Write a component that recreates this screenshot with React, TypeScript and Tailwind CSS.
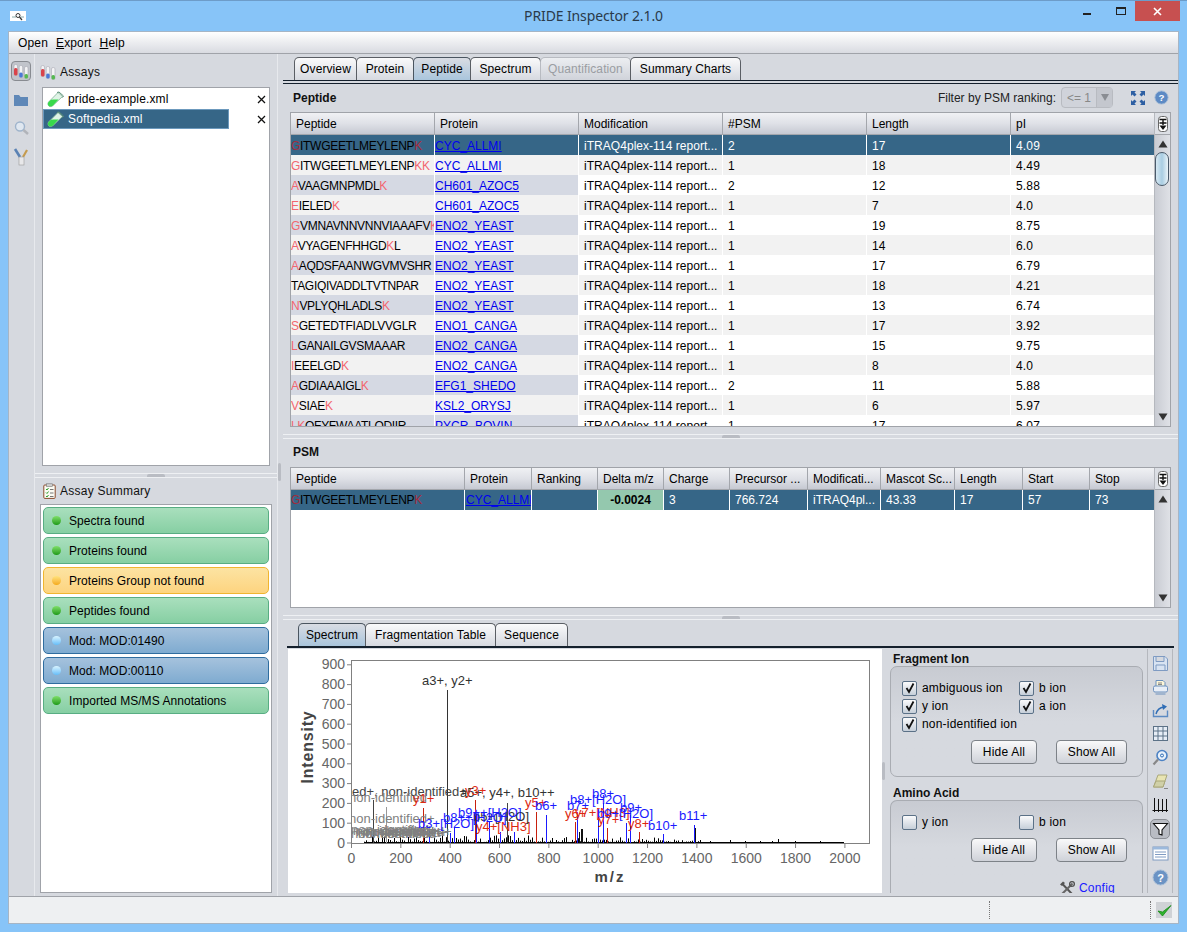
import React from "react";

const F = "[font-family:'Liberation_Sans',Arial,sans-serif]";

type Row = [string, string, string, number, number, string];
const rows: Row[] = [
  ["G|ITWGEETLMEYLENP|K", "CYC_ALLMI", "2", 17, 0, "4.09"],
  ["G|ITWGEETLMEYLENP|KK", "CYC_ALLMI", "1", 18, 0, "4.49"],
  ["A|VAAGMNPMDL|K", "CH601_AZOC5", "2", 12, 0, "5.88"],
  ["E|IELED|K", "CH601_AZOC5", "1", 7, 0, "4.0"],
  ["G|VMNAVNNVNNVIAAAFV|K", "ENO2_YEAST", "1", 19, 0, "8.75"],
  ["A|VYAGENFHHGD|K|L", "ENO2_YEAST", "1", 14, 0, "6.0"],
  ["A|AQDSFAANWGVMVSHR", "ENO2_YEAST", "1", 17, 0, "6.79"],
  ["|TAGIQIVADDLTVTNPAR", "ENO2_YEAST", "1", 18, 0, "4.21"],
  ["N|VPLYQHLADLS|K", "ENO2_YEAST", "1", 13, 0, "6.74"],
  ["S|GETEDTFIADLVVGLR", "ENO1_CANGA", "1", 17, 0, "3.92"],
  ["L|GANAILGVSMAAAR", "ENO2_CANGA", "1", 15, 0, "9.75"],
  ["I|EEELGD|K", "ENO2_CANGA", "1", 8, 0, "4.0"],
  ["A|GDIAAAIGL|K", "EFG1_SHEDO", "2", 11, 0, "5.88"],
  ["V|SIAE|K", "KSL2_ORYSJ", "1", 6, 0, "5.97"],
  ["LK|QFYFWAATLQDIIR", "PYCR_BOVIN", "1", 17, 0, "6.07"],
];

function Seq({ s, dim }: { s: string; dim?: boolean }) {
  const parts = s.split("|");
  return (
    <span className="tracking-[-0.3px] whitespace-nowrap">
      {parts.map((p, i) => (
        <span key={i} className={i % 2 === 0 ? (dim ? "text-[#a32b3c]" : "text-[#f2666f]") : "text-black"}>{p}</span>
      ))}
    </span>
  );
}

function HeaderCell({ w, children }: { w: string; children: React.ReactNode }) {
  return (
    <div className={`${w} h-full shrink-0 border-r border-[#a3a6ac] pl-[5px] flex items-center bg-gradient-to-b from-[#f0f1f4] via-[#dfe1e7] to-[#c6c9d2] text-[12px] text-black truncate`}>
      {children}
    </div>
  );
}

function Triangle({ up }: { up?: boolean }) {
  return (
    <svg width="10" height="8" viewBox="0 0 10 8">
      <path d={up ? "M5 0.5L9.5 7.5H0.5Z" : "M5 7.5L9.5 0.5H0.5Z"} fill="#333" />
    </svg>
  );
}

function ColumnIcon() {
  return (
    <div className="h-[22px] w-full shrink-0 flex items-center justify-center bg-[#dcdfe5] border-b border-[#a3a6ac]">
      <svg width="12" height="18" viewBox="0 0 12 18" fill="none">
        <rect x="1.5" y="1.5" width="9" height="15" rx="3" fill="#fff" stroke="#666" />
        <path d="M2.5 4.5H9.5M2.5 8H9.5M6 4.5V10" stroke="#111" strokeWidth="1.4" />
        <path d="M2.5 10.5H9.5L6 15Z" fill="#111" />
      </svg>
    </div>
  );
}

function Scrollbar({ thumb }: { thumb?: boolean }) {
  return (
    <div className="w-[16px] h-full shrink-0 flex flex-col border-l border-[#b5b8be] bg-gradient-to-r from-[#c9ccd3] to-[#dfe1e6]">
      <ColumnIcon />
      <div className="h-[17px] flex items-center justify-center shrink-0"><Triangle up /></div>
      <div className="flex-1 min-h-0">
        {thumb && <div className="h-[34px] w-[14px] rounded-[9px] border border-[#4a5a6a] bg-gradient-to-r from-[#d6e8f2] via-[#a9cde2] to-[#eaf3f8]" />}
      </div>
      <div className="h-[18px] flex items-center justify-center shrink-0"><Triangle /></div>
    </div>
  );
}

function PeptideTable() {
  const ws = ["w-[144px]", "w-[144px]", "w-[144px]", "w-[144px]", "w-[144px]", "w-[145px]"];
  return (
    <div className="mx-[7px] h-[315px] border border-[#a0a3a9] bg-white flex overflow-hidden">
      <div className="flex-1 min-w-0 flex flex-col">
        <div className="h-[22px] flex border-b border-[#a3a6ac] shrink-0">
          {["Peptide", "Protein", "Modification", "#PSM", "Length", "pI"].map((h, i) => (
            <HeaderCell key={h} w={ws[i]}>{h}</HeaderCell>
          ))}
        </div>
        <div className="flex-1 min-h-0 overflow-hidden">
          {rows.map((r, i) => {
            const sel = i === 0;
            const odd = i % 2 === 1;
            const alt = i % 2 === 0;
            const lead = sel ? "bg-[#366687]" : alt ? "bg-[#d5d9e3]" : "bg-[#f2f2f2]";
            const rest = sel ? "bg-[#366687] text-white" : odd ? "bg-[#f2f2f2] text-black" : "bg-white text-black";
            const c = "h-[20px] shrink-0 flex items-center pt-[1px] border-r border-white text-[12px] overflow-hidden";
            return (
              <div key={i} className="flex h-[20px]">
                <div className={`${c} w-[144px] ${lead}`}><Seq s={r[0]} dim={sel} /></div>
                <div className={`${c} w-[144px] ${lead}`}><span className="text-[#0000ee] underline">{r[1]}</span></div>
                <div className={`${c} w-[144px] pl-[5px] tracking-[0.04px] ${rest}`}>iTRAQ4plex-114 report...</div>
                <div className={`${c} w-[144px] pl-[5px] ${rest}`}>{r[2]}</div>
                <div className={`${c} w-[144px] pl-[5px] ${rest}`}>{r[3]}</div>
                <div className={`${c} w-[145px] pl-[5px] tracking-[0.15px] ${rest}`}>{r[5]}</div>
              </div>
            );
          })}
        </div>
      </div>
      <Scrollbar thumb />
    </div>
  );
}

function PsmTable() {
  const cols: [string, string, string][] = [
    ["Peptide", "w-[174px]", ""],
    ["Protein", "w-[67px]", ""],
    ["Ranking", "w-[66px]", ""],
    ["Delta m/z", "w-[66px]", ""],
    ["Charge", "w-[66px]", "3"],
    ["Precursor ...", "w-[78px]", "766.724"],
    ["Modificati...", "w-[73px]", "iTRAQ4pl..."],
    ["Mascot Sc...", "w-[74px]", "43.33"],
    ["Length", "w-[68px]", "17"],
    ["Start", "w-[67px]", "57"],
    ["Stop", "w-[66px]", "73"],
  ];
  return (
    <div className="mx-[7px] h-[141px] border border-[#a0a3a9] bg-white flex overflow-hidden">
      <div className="flex-1 min-w-0 flex flex-col">
        <div className="h-[22px] flex border-b border-[#a3a6ac] shrink-0">
          {cols.map((c) => <HeaderCell key={c[0]} w={c[1]}>{c[0]}</HeaderCell>)}
        </div>
        <div className="flex h-[20px] text-[12px] text-white bg-[#366687]">
          {cols.map((c, i) => (
            <div key={c[0]} className={`${c[1]} h-full shrink-0 flex items-center border-r border-white overflow-hidden ${i > 3 ? "pl-[5px]" : ""}`}>
              {i === 0 && <Seq s="G|ITWGEETLMEYLENP|K" dim />}
              {i === 1 && <span className="text-[#0000ee] underline pl-[1px]">CYC_ALLMI</span>}
              {i === 3 && <div className="w-full h-full bg-[#94c8ae] text-black font-bold flex items-center justify-center">-0.0024</div>}
              {i > 3 && c[2]}
            </div>
          ))}
        </div>
      </div>
      <Scrollbar />
    </div>
  );
}

function Tab({ label, w, active, disabled, first }: { label: string; w: string; active?: boolean; disabled?: boolean; first?: boolean }) {
  return (
    <div
      className={`${w} h-[23px] shrink-0 flex items-center justify-center rounded-t-[5px] border border-b-0 text-[12px] tracking-[0.1px] ${first ? "" : "ml-[-1px]"} ${
        active
          ? "border-[#4a5560] bg-gradient-to-b from-[#d9dce3] to-[#a9c5dc] text-black"
          : disabled
          ? "border-[#b8bbc1] bg-gradient-to-b from-[#eceef1] to-[#d0d3da] text-[#9a9da2]"
          : "border-[#5a5e64] bg-gradient-to-b from-[#fafafb] to-[#d6d9e0] text-black"
      }`}
    >
      {label}
    </div>
  );
}

function Divider({ className }: { className: string }) {
  return (
    <div className={`${className} flex items-center justify-center border-y border-[#eef0f3]`}>
      <div className="w-[18px] h-[3px] bg-[#b9bcc3] rounded-t-[2px]" />
    </div>
  );
}

function Tube() {
  return (
    <svg width="17" height="17" viewBox="0 0 17 17" fill="none" className="shrink-0">
      <path d="M11 1.5L15.5 5.5L6 14.5C4.5 16 2.6 15.8 1.6 14.7C.6 13.6.7 11.8 2 10.6Z" fill="#dff3e6" stroke="#7fae95" strokeWidth=".8" />
      <path d="M6.5 8.5L11.5 8.5L6 14.5C4.5 16 2.6 15.8 1.6 14.7C.6 13.6.7 11.8 2 10.6L4 8.8Z" fill="#38d94c" />
      <path d="M10 1.5L12 1L16.5 5L15.5 6.5" stroke="#5c8f78" strokeWidth="1" />
    </svg>
  );
}

function AssayIcon({ s = 16 }: { s?: number }) {
  return (
    <svg width={s} height={s} viewBox="0 0 16 16" fill="none">
      <rect x="1" y="1.5" width="3.5" height="11" rx="1.5" fill="#f3f3f5" stroke="#a9a9b3" strokeWidth=".6" />
      <rect x="1" y="5" width="3.5" height="7.5" rx="1.5" fill="#d9434a" />
      <rect x="6.2" y="2.5" width="3.5" height="12" rx="1.5" fill="#f3f3f5" stroke="#a9a9b3" strokeWidth=".6" />
      <rect x="6.2" y="9.5" width="3.5" height="5" rx="1.5" fill="#4a78d6" />
      <rect x="11.5" y="3.5" width="3.5" height="12" rx="1.5" fill="#f3f3f5" stroke="#a9a9b3" strokeWidth=".6" />
      <rect x="11.5" y="11" width="3.5" height="4.5" rx="1.5" fill="#56b851" />
    </svg>
  );
}

function AssayItem({ name, sel }: { name: string; sel?: boolean }) {
  return (
    <div className="h-[20px] flex items-center">
      <div className={`w-[186px] h-[20px] flex items-center gap-[4px] pl-[3px] text-[12px] tracking-[0.15px] border ${sel ? "bg-[#366687] text-white border-[#6c99bd]" : "border-transparent text-black"}`}>
        <Tube />
        {name}
      </div>
      <div className="ml-[28px] text-[#111]">
        <svg width="9" height="9" viewBox="0 0 9 9"><path d="M1 1L8 8M8 1L1 8" stroke="#111" strokeWidth="1.3" /></svg>
      </div>
    </div>
  );
}

function Pill({ label, kind }: { label: string; kind: "g" | "y" | "b" }) {
  const box = {
    g: "from-[#a9dfbd] to-[#86cfa3] border-[#58ad83]",
    y: "from-[#fce3a2] to-[#fdd47f] border-[#f0b52f]",
    b: "from-[#a5c2dd] to-[#7fabd0] border-[#2f6d9f]",
  }[kind];
  const dot = {
    g: "from-[#7fe06a] to-[#169a12]",
    y: "from-[#ffe37c] to-[#f4a90f]",
    b: "from-[#d9f4ff] to-[#63bdf8]",
  }[kind];
  return (
    <div className={`h-[27px] mb-[3px] rounded-[5px] border bg-gradient-to-b ${box} flex items-center pl-[8px] gap-[8px] text-[12px] tracking-[0.05px] text-black`}>
      <div className={`w-[9px] h-[9px] rounded-full bg-gradient-to-b ${dot}`} />
      {label}
    </div>
  );
}

function Check({ on, label }: { on?: boolean; label: string }) {
  return (
    <div className="h-[18px] flex items-center gap-[5px] text-[12px] tracking-[0.2px] text-black whitespace-nowrap">
      <div className="w-[15px] h-[15px] rounded-[2px] border border-[#5b7187] bg-gradient-to-b from-[#fbfbfc] to-[#c6cfd9] flex items-center justify-center">
        {on && <svg width="12" height="12" viewBox="0 0 12 12"><path d="M2.5 6L5 10L9.5 1.5" fill="none" stroke="#111" strokeWidth="1.8" /></svg>}
      </div>
      {label}
    </div>
  );
}

function Btn({ label, w }: { label: string; w: string }) {
  return (
    <div className={`${w} h-[24px] rounded-[4px] border border-[#7d8288] bg-gradient-to-b from-[#f9f9fa] to-[#cfd2d9] flex items-center justify-center text-[12px] tracking-[0.2px] text-black`}>
      {label}
    </div>
  );
}

type Lbl = [number, number, string, string];
const grayLabels: Lbl[] = [
  [352, 796, "ed+, non-identified+", "#444"],
  [349, 802, "non-identified", "#808080"],
  [349, 823, "non-identified+", "#808080"],
  [351, 834, "non-identified+", "#808080"],
  [353, 835, "non-identified+", "#808080"],
  [356, 836, "non-identified+", "#808080"],
  [351, 838, "non-identified+", "#808080"],
  [358, 838, "non-identified+", "#808080"],
  [362, 837, "non-identified+", "#808080"],
  [366, 836, "non-identified+", "#808080"],
];
const labels: Lbl[] = [
  [422, 685, "a3+, y2+", "#333"],
  [460, 797, "a5+, y4+, b10++", "#333"],
  [413, 803, "y1+", "#dd2a10"],
  [465, 795, "y3+", "#dd2a10"],
  [525, 807, "y5+", "#dd2a10"],
  [535, 810, "b6+", "#1a1aff"],
  [567, 810, "b7+", "#1a1aff"],
  [570, 804, "b8+[H2O]", "#1a1aff"],
  [592, 798, "b8+", "#1a1aff"],
  [565, 818, "y6+", "#dd2a10"],
  [575, 817, "y7+[NH3]", "#dd2a10"],
  [597, 818, "b9+[H2O]", "#1a1aff"],
  [598, 824, "y7+", "#dd2a10"],
  [620, 812, "b9+", "#1a1aff"],
  [628, 828, "y8+", "#dd2a10"],
  [648, 830, "b10+", "#1a1aff"],
  [679, 820, "b11+", "#1a1aff"],
  [476, 831, "y4+[NH3]", "#dd2a10"],
  [473, 821, "b5+[H2O]", "#333"],
  [443, 822, "b8++[H2O]", "#1a1aff"],
  [458, 817, "b9++[H2O]", "#1a1aff"],
  [418, 828, "b3+[H2O]", "#1a1aff"],
];
const peaks: [number, number, string][] = [
  [447.5, 690, "#333"], [373.5, 800, "#444"], [386.5, 807, "#999"], [423.5, 808, "#c8200d"], [429.5, 831, "#1a1aff"],
  [450.5, 833, "#1a1aff"], [454.5, 827, "#1a1aff"], [475.5, 800, "#c8200d"], [476.5, 815, "#1a1aff"], [489.5, 821, "#1a1aff"],
  [500.5, 832, "#1a1aff"], [507.5, 803, "#444"], [514.5, 832, "#1a1aff"], [536.5, 812, "#c8200d"], [546.5, 815, "#1a1aff"],
  [575.5, 822, "#c8200d"], [577.5, 812, "#1a1aff"], [579.5, 832, "#111"], [581.5, 829, "#111"], [582.5, 829, "#111"], [598.5, 810, "#1a1aff"],
  [603.5, 803, "#1a1aff"], [607.5, 828, "#c8200d"], [626.5, 823, "#1a1aff"], [630.5, 815, "#1a1aff"], [639.5, 832, "#c8200d"],
  [663.5, 834, "#1a1aff"], [694.5, 825, "#1a1aff"], [695.5, 828, "#111"],
];

function Chart() {
  const noise: string[] = [];
  for (let x = 364; x < 700; x += 2) {
    const v = Math.abs(Math.sin(x * 12.9898) * 43758.5453) % 1;
    const lim = x < 530 ? 7 : x < 660 ? 5 : 3;
    noise.push(`M${x + 0.5} 843V${(843 - 1 - v * v * lim).toFixed(1)}`);
  }
  const xt = [0, 200, 400, 600, 800, 1000, 1200, 1400, 1600, 1800, 2000];
  const yt = [0, 100, 200, 300, 400, 500, 600, 700, 800, 900];
  return (
    <svg viewBox="288 649 594 244" width="594" height="244" className="block shrink-0">
      <defs>
        <clipPath id="plot"><rect x="351" y="660" width="518" height="183" /></clipPath>
      </defs>
      <rect x="288" y="649" width="594" height="244" fill="#fff" />
      <rect x="351.5" y="660.5" width="518" height="183" fill="none" stroke="#808080" />
      <g fontFamily="'Liberation Sans', Arial, sans-serif" fontSize="13">
        {yt.map((v) => {
          const y = 843 - v * 0.198;
          return (
            <g key={v}>
              <path d={`M347 ${y}H351`} stroke="#808080" />
              <text x="345" y={y + 4.5} textAnchor="end" fill="#666" fontSize="14">{v}</text>
            </g>
          );
        })}
        {xt.map((v) => {
          const x = 351.5 + v * 0.2467;
          return (
            <g key={v}>
              <path d={`M${x} 844V848`} stroke="#808080" />
              <text x={x} y="863" textAnchor="middle" fill="#666" fontSize="14">{v}</text>
            </g>
          );
        })}
        <text transform="translate(313 747) rotate(-90)" textAnchor="middle" fontWeight="bold" fontSize="16" letterSpacing="0.8" fill="#444">Intensity</text>
        <text x="610" y="882" textAnchor="middle" fontWeight="bold" fontSize="15" fill="#444" letterSpacing="2">m/z</text>
        <g clipPath="url(#plot)">
          <path d="M365 842.5H844" stroke="#000" />
          <path d={noise.join("")} stroke="#000" strokeWidth="1" />
          <path d="M700.5 843V840M710.5 843V841M730.5 843V840M745.5 843V841M760.5 843V841M772.5 843V841M778.5 843V839M795.5 843V841M820.5 843V841" stroke="#000" />
          {peaks.map((p, i) => <path key={i} d={`M${p[0]} 843V${p[1]}`} stroke={p[2]} />)}
          {grayLabels.map((l, i) => <text key={i} x={l[0]} y={l[1]} fill={l[3]}>{l[2]}</text>)}
          {labels.map((l, i) => <text key={i} x={l[0]} y={l[1]} fill={l[3]}>{l[2]}</text>)}
        </g>
      </g>
    </svg>
  );
}

const toolIcons: React.ReactNode[] = [
  <path d="M1.5 1.5H13L15.5 4V15.5H1.5ZM4 1.5V6.5H12V1.5M4 15.5V10H13V15.5" fill="#d8e3f2" stroke="#7f9bc2" />,
  <g stroke="#6b90bd" fill="#e8eef7"><path d="M4 7V1.5H11L13 3.5V7" fill="#fdf6d8" /><rect x="1.5" y="7" width="14" height="6" rx="1.5" /><path d="M3.5 15H13.5" /><path d="M6 4H10M6 5.5H10" stroke="#888" /></g>,
  <g fill="none" strokeWidth="1.4"><path d="M1.5 8V14.5H15.5V8.5" stroke="#5b8ac2" /><path d="M4 12C5 8 8 5.5 12 5" stroke="#2f6db5" /><path d="M10 2L15 4.5L11 8Z" fill="#2f6db5" stroke="none" /></g>,
  <g fill="#e6edf6" stroke="#5c7287"><rect x="1.5" y="1.5" width="14" height="14" /><path d="M1.5 6H15.5M1.5 11H15.5M6 1.5V15.5M11 1.5V15.5" /></g>,
  <g fill="none"><circle cx="10" cy="6.5" r="5" stroke="#4c82c4" strokeWidth="1.6" fill="#e8f1fb" /><path d="M6 10.5L1.5 15.5" stroke="#888" strokeWidth="2.2" /><circle cx="10" cy="6.5" r="1.5" stroke="#2f6db5" /></g>,
  <g><path d="M6 2H15L11 14H1.5Z" fill="#e8e4b2" stroke="#a9a77a" /><path d="M1.5 14H11L13 8H4Z" fill="#d0d0a8" stroke="#a9a77a" /><path d="M12 15.5H16" stroke="#888" /></g>,
  <g stroke="#111" fill="none"><path d="M2.5 1V15M6.5 2V15M10.5 2V15M14.5 2V15M0.5 13.5H16" /></g>,
  <path d="M1.5 2.5H15.5L10 9V14L7 13V9Z" fill="#fff" stroke="#111" strokeWidth="1.1" />,
  <g><rect x="1" y="2" width="15" height="13" fill="#fff" stroke="#7f9bc2" /><rect x="1" y="2" width="15" height="2.5" fill="#9cb9dc" /><path d="M3 7H14M3 9.5H14M3 12H14" stroke="#7f9bc2" /></g>,
  <g><circle cx="8.5" cy="8.5" r="7.5" fill="#6b93c4" stroke="#a7bed8" /><text x="8.5" y="12.5" textAnchor="middle" fontFamily="'Liberation Sans',sans-serif" fontWeight="bold" fontSize="11" fill="#fff">?</text></g>,
];

function Toolbar() {
  const gaps = ["h-[24px]", "h-[24px]", "h-[23px]", "h-[23px]", "h-[24px]", "h-[24px]", "h-[24px]", "h-[24px]", "h-[24px]", "h-[24px]"];
  return (
    <div className="w-[26px] h-[244px] ml-[1px] shrink-0 border-x border-[#b5b8be] pt-[2px] flex flex-col items-center">
      {toolIcons.map((ic, i) => (
        <div key={i} className={`${gaps[i]} w-full shrink-0 flex items-center justify-center`}>
          <div className={`w-[20px] h-[20px] flex items-center justify-center ${i === 7 ? "rounded-[5px] bg-[#b9bcc3] border border-[#8b8e94]" : ""}`}>
            <svg width="17" height="17" viewBox="0 0 17 17">{ic}</svg>
          </div>
        </div>
      ))}
    </div>
  );
}

function IonPanel() {
  return (
    <div className="w-[258px] shrink-0 h-[244px] overflow-hidden">
      <div className="h-[18px] pl-[5px] pt-[1px] font-bold text-[12px] flex items-center text-[#111]">Fragment Ion</div>
      <div className="h-[111px] rounded-[7px] ml-[2px] mr-[3px] mt-[-1px] border border-[#a9acb2] bg-gradient-to-b from-[#c8cbd2] via-[#d6d9df] to-[#d6d9df] pl-[11px] pt-[12px]">
        <div className="grid grid-cols-[117px_1fr]">
          <Check on label="ambiguous ion" />
          <Check on label="b ion" />
          <Check on label="y ion" />
          <Check on label="a ion" />
          <Check on label="non-identified ion" />
        </div>
        <div className="flex pl-[69px] gap-[19px] mt-[7px]">
          <Btn label="Hide All" w="w-[66px]" />
          <Btn label="Show All" w="w-[71px]" />
        </div>
      </div>
      <div className="h-[18px] mt-[6px] pl-[5px] pt-[1px] font-bold text-[12px] flex items-center text-[#111]">Amino Acid</div>
      <div className="h-[93px] overflow-hidden rounded-t-[7px] ml-[2px] mr-[3px] mt-[-1px] border border-b-0 border-[#a9acb2] bg-gradient-to-b from-[#c8cbd2] via-[#d6d9df] to-[#d6d9df] pl-[11px] pt-[12px]">
        <div className="grid grid-cols-[117px_1fr]">
          <Check label="y ion" />
          <Check label="b ion" />
        </div>
        <div className="flex pl-[69px] gap-[19px] mt-[7px]">
          <Btn label="Hide All" w="w-[66px]" />
          <Btn label="Show All" w="w-[71px]" />
        </div>
        <div className="pl-[157px] mt-[17px] flex items-center gap-[4px] text-[#1a1aff] text-[12px] tracking-[0.2px]">
          <svg width="16" height="15" viewBox="0 0 16 15" fill="none">
            <path d="M3 2.5L14 14" stroke="#555" strokeWidth="2" />
            <path d="M13.5 2.5L2 14" stroke="#666" strokeWidth="2" />
            <path d="M1 3.5L4 .5L6 2L3 5Z" fill="#555" />
            <circle cx="13" cy="3" r="2.4" fill="none" stroke="#555" strokeWidth="1.4" />
          </svg>
          Config
        </div>
      </div>
    </div>
  );
}

export default function App() {
  return (
    <div className={`w-[1187px] h-[932px] bg-[#87c4f8] flex flex-col overflow-hidden ${F} text-[12px]`}>
      <div className="h-[31px] shrink-0 grid grid-cols-[1fr_auto_1fr] items-center border-t border-[#6d9cc9]">
        <div className="pl-[10px]">
          <div className="w-[16px] h-[10px] bg-white flex items-center justify-center">
            <svg width="14" height="9" viewBox="0 0 14 9" fill="none"><path d="M1 5H5M10 5H13" stroke="#8aa" strokeWidth="1" /><circle cx="7" cy="3.5" r="2" stroke="#333" /><path d="M8.5 5L11 8" stroke="#333" strokeWidth="1.2" /></svg>
          </div>
        </div>
        <div className="text-[14px] tracking-[-0.12px] text-[#2a3a4a] [font-family:'Noto_Sans',sans-serif] pb-[2px]">PRIDE Inspector 2.1.0</div>
        <div className="flex justify-end items-start h-full pr-[7px]">
          <div className="w-[46px] h-[20px] flex items-center justify-center pl-[6px]"><div className="w-[8px] h-[2px] mt-[6px] bg-[#222]" /></div>
          <div className="w-[28px] h-[20px] flex items-center justify-center"><div className="w-[10px] h-[8px] border border-t-[2px] border-[#222]" /></div>
          <div className="w-[45px] h-[20px] bg-[#c75050] flex items-center justify-center">
            <svg width="9" height="9" viewBox="0 0 9 9"><path d="M1 1L8 8M8 1L1 8" stroke="#fff" strokeWidth="1.6" /></svg>
          </div>
        </div>
      </div>

      <div className="mx-[8px] h-[893px] shrink-0 flex flex-col bg-[#d6d9df] border border-[#a6b5c5]">
        <div className="h-[22px] shrink-0 bg-gradient-to-b from-white to-[#d9dbe1] border-b border-[#a0a3a9] flex items-center pl-[9px] gap-[8px] text-[12px] tracking-[0.15px] text-black">
          <span>Open</span>
          <span><span className="underline">E</span>xport</span>
          <span><span className="underline">H</span>elp</span>
        </div>

        <div className="flex-1 min-h-0 flex">
          <div className="w-[25px] shrink-0 flex flex-col items-center pt-[7px] pr-[1px] gap-[11px]">
            <div className="w-[20px] h-[20px] rounded-[4px] border border-[#888b91] bg-[#c1c4cb] flex items-center justify-center"><AssayIcon /></div>
            <svg width="16" height="16" viewBox="0 0 16 16"><path d="M1 3H6L7.5 5H15V14H1Z" fill="#5f88b8" /></svg>
            <svg width="17" height="17" viewBox="0 0 17 17" fill="none" className="mt-[1px]"><circle cx="7" cy="6.5" r="4.5" fill="#dfe7f0" stroke="#9fb4cc" strokeWidth="1.4" /><path d="M10.5 10L15 14" stroke="#b1b4ba" strokeWidth="2.4" /></svg>
            <svg width="16" height="18" viewBox="0 0 16 18" fill="none"><path d="M2 1L7 9" stroke="#5a82b4" strokeWidth="2.6" /><path d="M14 2L10 9" stroke="#c59b4e" strokeWidth="2.2" /><rect x="6" y="9" width="5" height="8" fill="#e8e8ea" stroke="#999" strokeWidth=".6" /></svg>
          </div>

          <div className="w-[244px] shrink-0 flex flex-col border-x border-[#e7e9ed]">
            <div className="h-[33px] shrink-0 flex items-center gap-[4px] pl-[5px] pt-[2px] text-[12px] tracking-[0.25px] text-[#111]">
              <AssayIcon />Assays
            </div>
            <div className="h-[379px] mx-[7px] shrink-0 bg-white border border-[#a0a3a9] pt-[1px]">
              <AssayItem name="pride-example.xml" />
              <AssayItem name="Softpedia.xml" sel />
            </div>
            <Divider className="h-[5px] mt-[7px] shrink-0" />
            <div className="h-[26px] shrink-0 flex items-center gap-[4px] pl-[8px] text-[12px] tracking-[0.25px] text-[#111]">
              <svg width="13" height="16" viewBox="0 0 13 16" fill="none"><rect x=".8" y="2" width="11.4" height="13.4" rx="1" fill="#fbfbf3" stroke="#8a4a2a" /><rect x="3.5" y=".8" width="6" height="2.5" fill="#cfcfcf" stroke="#777" strokeWidth=".6" /><path d="M3 6L4 7L5.5 5M3 9.5L4 10.5L5.5 8.5M3 13L4 14L5.5 12" stroke="#2fa02f" /><path d="M7 6.5H10.5M7 10H10.5M7 13.5H10.5" stroke="#777" /></svg>
              Assay Summary
            </div>
            <div className="h-[389px] mx-[5px] shrink-0 bg-white border border-[#a0a3a9] pt-[2px] px-[2px]">
              <Pill label="Spectra found" kind="g" />
              <Pill label="Proteins found" kind="g" />
              <Pill label="Proteins Group not found" kind="y" />
              <Pill label="Peptides found" kind="g" />
              <Pill label="Mod: MOD:01490" kind="b" />
              <Pill label="Mod: MOD:00110" kind="b" />
              <Pill label="Imported MS/MS Annotations" kind="g" />
            </div>
          </div>

          <div className="w-[5px] shrink-0 flex items-center pb-[6px]"><div className="w-[3px] h-[18px] bg-[#b9bcc3] rounded-[2px]" /></div>

          <div className="w-[895px] shrink-0 flex flex-col">
            <div className="flex items-end pl-[11px] pt-[3px] h-[26px] shrink-0">
              <Tab label="Overview" w="w-[63px]" first />
              <Tab label="Protein" w="w-[58px]" />
              <Tab label="Peptide" w="w-[58px]" active />
              <Tab label="Spectrum" w="w-[71px]" />
              <Tab label="Quantification" w="w-[91px]" disabled />
              <Tab label="Summary Charts" w="w-[111px]" />
            </div>
            <div className="h-[4px] shrink-0 border-y border-[#14202c]" />
            <div className="h-[28px] shrink-0 flex items-center pl-[10px] pr-[9px] pb-[1px]">
              <span className="font-bold text-[12px] text-[#111]">Peptide</span>
              <div className="ml-auto flex items-center text-[12px] text-[#222]">
                Filter by PSM ranking:
                <div className="ml-[5px] w-[52px] h-[21px] rounded-[4px] border border-[#b8bbc1] bg-[#d0d3da] flex items-center text-[#888]">
                  <span className="pl-[5px] flex-1">&lt;= 1</span>
                  <span className="w-[16px] h-full border-l border-[#b8bbc1] bg-[#c4c7ce] flex items-center justify-center text-[#8a8d93]">
                    <svg width="8" height="7" viewBox="0 0 8 7"><path d="M0 0H8L4 7Z" fill="#8a8d93" /></svg>
                  </span>
                </div>
                <svg width="14" height="14" viewBox="0 0 14 14" className="ml-[18px]" fill="#2d5fa3"><path d="M0 0H5L3.5 1.5L5.5 3.5L3.5 5.5L1.5 3.5L0 5ZM14 0V5L12.5 3.5L10.5 5.5L8.5 3.5L10.5 1.5L9 0ZM0 14V9L1.5 10.5L3.5 8.5L5.5 10.5L3.5 12.5L5 14ZM14 14H9L10.5 12.5L8.5 10.5L10.5 8.5L12.5 10.5L14 9Z" /></svg>
                <svg width="15" height="15" viewBox="0 0 17 17" className="ml-[9px]"><circle cx="8.5" cy="8.5" r="7.5" fill="#5d8ac4" stroke="#a7bed8" /><text x="8.5" y="12.5" textAnchor="middle" fontFamily="'Liberation Sans',sans-serif" fontWeight="bold" fontSize="11" fill="#fff">?</text></svg>
              </div>
            </div>
            <PeptideTable />
            <Divider className="h-[5px] mt-[7px] shrink-0" />
            <div className="h-[28px] shrink-0 flex items-center pl-[10px] pb-[2px] font-bold text-[12px] text-[#111]">PSM</div>
            <PsmTable />
            <Divider className="h-[5px] mt-[7px] shrink-0" />
            <div className="flex items-end pl-[15px] h-[23px] mt-[3px] shrink-0">
              <Tab label="Spectrum" w="w-[68px]" first active />
              <Tab label="Fragmentation Table" w="w-[131px]" />
              <Tab label="Sequence" w="w-[73px]" />
            </div>
            <div className="h-[2px] shrink-0 ml-[4px] mr-[4px] border-b-[2px] border-[#14202c]" />
            <div className="flex-1 min-h-0 flex pl-[5px] pt-[1px] overflow-hidden">
              <Chart />
              <div className="w-[6px] h-[244px] shrink-0 flex items-center"><div className="w-[3px] h-[18px] bg-[#b9bcc3] rounded-[2px]" /></div>
              <IonPanel />
              <Toolbar />
            </div>
          </div>
        </div>

        <div className="h-[27px] shrink-0 border-t border-[#a0a3a9] bg-[#eef0f2] flex items-center justify-end">
          <div className="h-[18px] border-l border-dotted border-[#777] w-[161px]" />
          <div className="h-[18px] border-l border-dotted border-[#777] w-[28px] flex items-center pl-[5px]">
            <div className="w-[16px] h-[16px] bg-[#cfd2d6] flex items-center justify-center">
              <svg width="15" height="13" viewBox="0 0 15 13"><path d="M1 7L5.5 12L14 1.5L5.5 8Z" fill="#2fb32f" stroke="#168a16" strokeWidth=".8" /></svg>
            </div>
          </div>
        </div>
      </div>
    </div>
  );
}
